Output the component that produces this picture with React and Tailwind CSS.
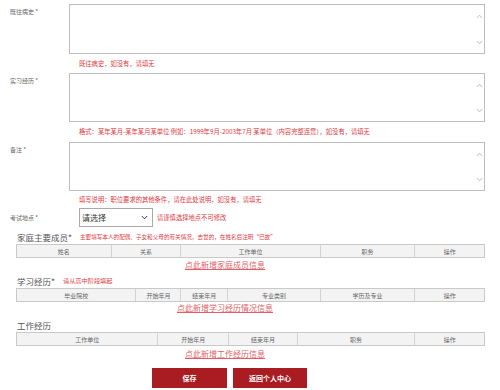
import React from 'react';

const font = { fontFamily: '"Microsoft YaHei", "Noto Sans CJK SC", "Liberation Sans", sans-serif' };

const Chevron = ({ up }) => (
  <svg width="7" height="5" viewBox="0 0 7 5" className="text-[#b5b5b5]">
    <path d={up ? 'M0.8 4 L3.5 1.2 L6.2 4' : 'M0.8 1 L3.5 3.8 L6.2 1'} fill="none" stroke="currentColor" strokeWidth="0.9" />
  </svg>
);

const TextBox = ({ h }) => (
  <div className={`w-[416px] ${h} border border-[#bdbdbd] bg-white flex justify-end`}>
    <div className="flex flex-col justify-between items-center w-[10px] pt-[9px] pb-[8px]">
      <Chevron up />
      <Chevron />
    </div>
  </div>
);

const Field = ({ label, h }) => (
  <div className="flex">
    <div className="w-[69px] pl-[10px] pt-[4px] text-[6px] leading-[8px] text-[#666]">{label} *</div>
    <TextBox h={h} />
  </div>
);

const Hint = ({ h, children }) => (
  <div className={`${h} pl-[79px] flex items-center text-[6.3px] text-[#dc3a42] whitespace-nowrap`}>{children}</div>
);

const Table = ({ cols }) => (
  <div className="ml-[16px] w-[469px] h-[14px] flex border border-[#c9c9c9] bg-[#f3f3f3]">
    {cols.map(([name, w], i) => (
      <div
        key={name}
        className={`h-full flex items-center justify-center text-[6px] text-[#666] ${i > 0 ? 'border-l border-[#d2d2d2]' : ''}`}
        style={{ width: w }}
      >
        {name}
      </div>
    ))}
  </div>
);

const AddLink = ({ h, ml, children }) => (
  <div className={`${h} flex items-center`}>
    <span className={`${ml} text-[8px] leading-[9px] text-[#df5f68] underline decoration-[#df5f68]`}>{children}</span>
  </div>
);

export default function App() {
  return (
    <div className="w-[500px] h-[390px] bg-white overflow-hidden" style={font}>
      <div className="pt-[4px]">
        <Field label="既往病史" h="h-[50px]" />
      </div>
      <Hint h="h-[19px]">既往病史，如没有，请填无</Hint>
      <Field label="实习经历" h="h-[49px]" />
      <Hint h="h-[20px]">格式：某年某月-某年某月某单位 例如：1999年9月-2003年7月 某单位（内容完整连贯），如没有，请填无</Hint>
      <Field label="备注" h="h-[49px]" />
      <Hint h="h-[17px]">填写说明：职位要求的其他条件，请在此处说明，如没有，请填无</Hint>

      <div className="flex items-center h-[19px]">
        <div className="w-[79px] pl-[10px] text-[6px] text-[#666]">考试地点 *</div>
        <div className="w-[74px] h-[19px] border border-[#a9a9a9] bg-white flex items-center justify-between pl-[2px] pr-[4px]">
          <span className="text-[8px] text-[#333]">请选择</span>
          <svg width="7" height="5" viewBox="0 0 7 5">
            <path d="M0.8 1 L3.5 3.8 L6.2 1" fill="none" stroke="#444" strokeWidth="1" />
          </svg>
        </div>
        <span className="ml-[4px] text-[6.3px] text-[#dc3a42]">请谨慎选择地点不可修改</span>
      </div>

      <div className="h-[17px] pt-[3px] flex items-center pl-[17px] whitespace-nowrap">
        <span className="text-[8.5px] text-[#555]">家庭主要成员*</span>
        <span className="ml-[8px] text-[5.6px] text-[#dc3a42]">主要填写本人的配偶、子女和父母的有关情况，去世的，在姓名后注明“已故”</span>
      </div>
      <Table cols={[['姓名', 94], ['关系', 70], ['工作单位', 140], ['职务', 95], ['操作', 70]]} />
      <AddLink h="h-[12px]" ml="ml-[185px]">点此新增家庭成员信息</AddLink>

      <div className="h-[18px] pt-[4px] flex items-center pl-[17px]">
        <span className="text-[8.5px] text-[#555]">学习经历*</span>
        <span className="ml-[8px] text-[6.2px] text-[#dc3a42]">请从高中阶段填起</span>
      </div>
      <Table cols={[['毕业院校', 119], ['开始年月', 45], ['结束年月', 47], ['专业类别', 93], ['学历及专业', 95], ['操作', 70]]} />
      <AddLink h="h-[10px]" ml="ml-[177px]">点此新增学习经历情况信息</AddLink>

      <div className="h-[20px] pt-[6px] flex items-center pl-[17px]">
        <span className="text-[8.5px] text-[#555]">工作经历</span>
      </div>
      <Table cols={[['工作单位', 141], ['开始年月', 71], ['结束年月', 69], ['职务', 118], ['操作', 70]]} />
      <AddLink h="h-[14px]" ml="ml-[185px]">点此新增工作经历信息</AddLink>

      <div className="mt-[8px] flex gap-[6px] pl-[152px]">
        <button className="w-[75px] h-[20px] bg-[#a91c22] text-white text-[7px] font-bold">保存</button>
        <button className="w-[74px] h-[20px] bg-[#a91c22] text-white text-[7px] font-bold">返回个人中心</button>
      </div>
    </div>
  );
}
